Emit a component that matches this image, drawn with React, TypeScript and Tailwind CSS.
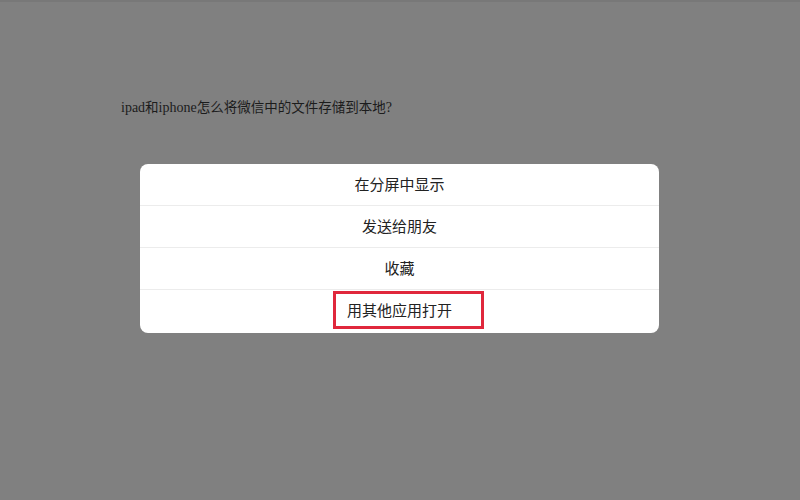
export default function App() {
  const items = ["在分屏中显示", "发送给朋友", "收藏"];
  return (
    <div className="w-[800px] h-[500px] bg-[#808080] relative overflow-hidden" style={{ fontFamily: '"Noto Sans CJK SC", "Noto Sans", sans-serif' }}>
      <div className="h-[2px] bg-[#787878]" />
      <div className="pl-[121px] pt-[94px] h-[162px]">
        <p className="text-[13.5px] leading-[20px] text-[#1c1c1c]">
          <span style={{ fontFamily: '"Liberation Serif", serif' }} className="text-[14px]">ipad</span>和<span style={{ fontFamily: '"Liberation Serif", serif' }} className="text-[14px]">iphone</span>怎么将微信中的文件存储到本地<span style={{ fontFamily: '"Liberation Serif", serif' }} className="text-[14px]">?</span>
        </p>
      </div>
      <div className="ml-[140px] w-[519px] bg-white rounded-[8px] flex flex-col">
        {items.map((t) => (
          <div key={t} className="h-[42px] border-b border-[#ececec] flex items-center justify-center text-[15px] text-[#222]">
            {t}
          </div>
        ))}
        <div className="h-[43px] flex items-start pt-[1px] pl-[193px]">
          <div className="w-[151px] h-[38px] border-[3px] border-[#e0283c] flex items-center pl-[11px] text-[15px] text-[#222]">
            用其他应用打开
          </div>
        </div>
      </div>
    </div>
  );
}
